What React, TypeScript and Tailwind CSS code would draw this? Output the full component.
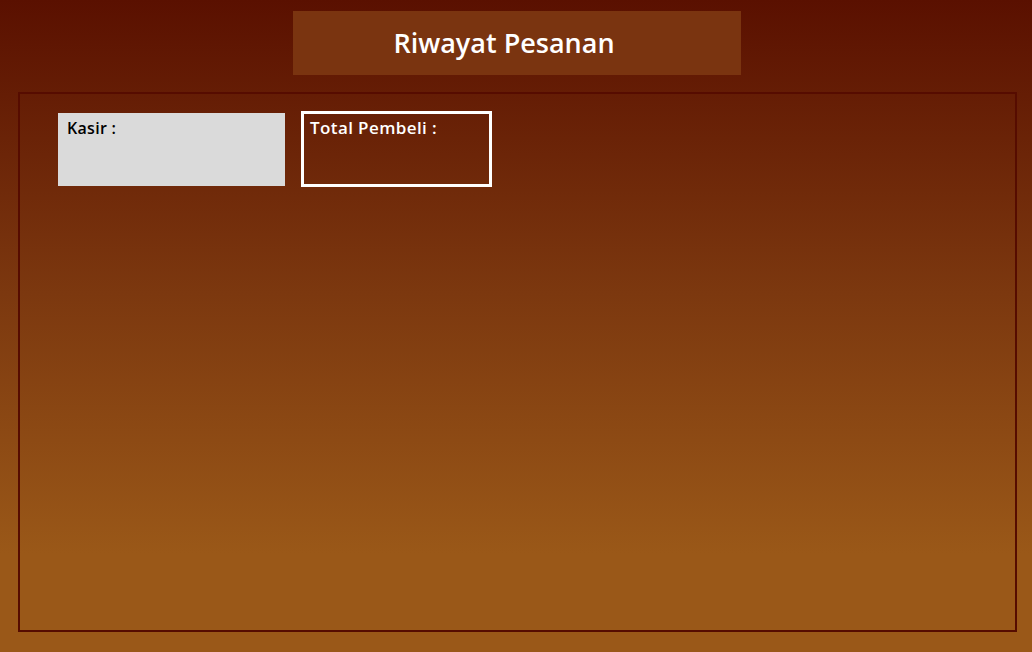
import React from 'react';

export default function App() {
  return (
    <div
      className="h-[652px] w-full overflow-hidden bg-[linear-gradient(180deg,#5a1000_0%,#7c380f_45%,#9a5818_85%,#9a5818_100%)] pt-[11px]"
      style={{ fontFamily: '"Open Sans", Lato, sans-serif' }}
    >
      <div className="ml-[293px] flex h-[64px] w-[448px] items-center justify-center bg-[#7a3410] pr-[26px]">
        <h1 className="text-[27px] font-semibold text-white">Riwayat Pesanan</h1>
      </div>

      <div className="mt-[17px] ml-[18px] h-[540px] w-[999px] border-2 border-[#560c00]">
        <div className="flex items-center gap-4 pl-[38px] pt-[17px]">
          <div className="h-[73px] w-[227px] bg-[#dadada] px-[9px] pt-[3px]">
            <p className="text-[16px] font-semibold text-black tracking-[0.3px]">Kasir :</p>
          </div>
          <div className="h-[76px] w-[191px] border-[3px] border-white px-[6px] pt-[1px]">
            <p className="text-[17px] font-semibold text-white tracking-[0.4px]">Total Pembeli :</p>
          </div>
        </div>
      </div>
    </div>
  );
}
